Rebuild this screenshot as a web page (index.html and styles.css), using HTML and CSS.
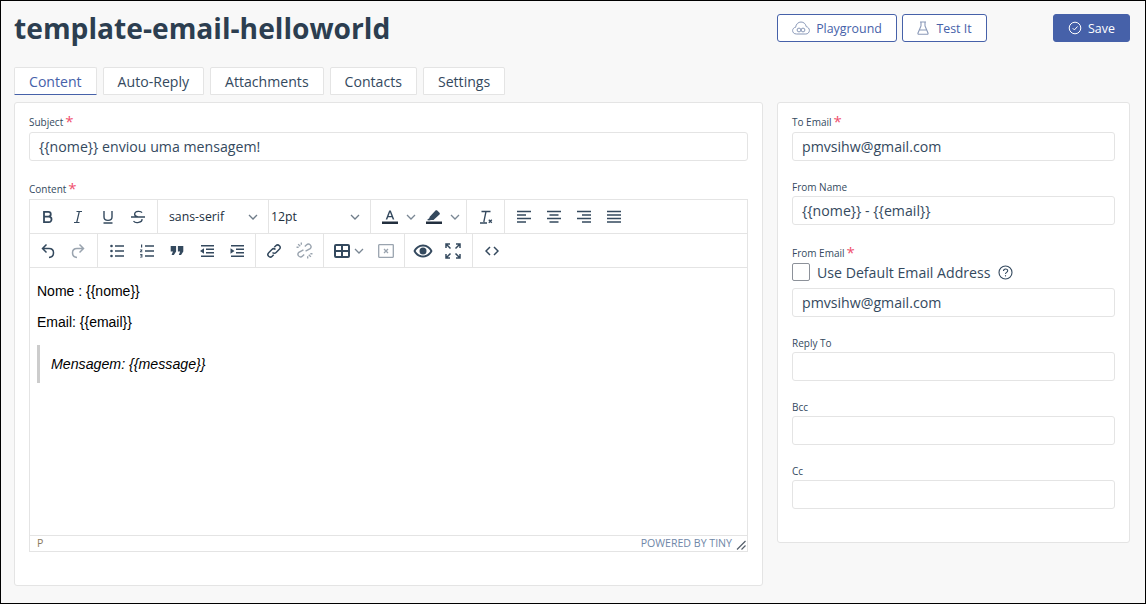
FILE: index.html
```html
<!DOCTYPE html>
<html lang="en">
<head>
  <meta charset="UTF-8">
  <title>template-email-helloworld</title>
  <link rel="stylesheet" href="styles.css">
</head>
<body>

<div class="page">
  <!-- Header -->
  <div class="top-bar">
    <h1 class="page-title">template-email-helloworld</h1>
    <div class="top-actions">
      <button class="btn btn-outline btn-playground">
        <svg width="18" height="14" viewBox="0 0 18 14" fill="none" stroke="#8a99b8" stroke-width="1"><path d="M4.5 13 C1.8 13 .6 11.2 .6 9.6 C.6 7.8 2 6.4 3.6 6.3 C4 3 6.4 1 9 1 C11.6 1 13.8 2.9 14.2 5.6 C16 6 17.4 7.6 17.4 9.4 C17.4 11.4 15.8 13 13.8 13 Z"/><circle cx="7" cy="9" r="1.9"/><circle cx="11" cy="9" r="1.9"/></svg>
        Playground
      </button>
      <button class="btn btn-outline btn-test">
        <svg width="12" height="14" viewBox="0 0 12 14" fill="none" stroke="#8a99b8" stroke-width="1.1"><path d="M3 1h6M4 1v4L1 12c-.3.7.1 1.3.8 1.3h8.4c.7 0 1.1-.6.8-1.3L8 5V1M2.8 9h6.4"/></svg>
        Test It
      </button>
      <button class="btn btn-save">
        <svg width="14" height="14" viewBox="0 0 14 14" fill="none" stroke="#fff" stroke-width="1"><circle cx="7" cy="7" r="5.8"/><path d="M4.7 7.2l1.7 1.7 3.1-3.4"/></svg>
        Save
      </button>
    </div>
  </div>

  <!-- Tabs -->
  <div class="tabs">
    <div class="tab active">Content</div>
    <div class="tab">Auto-Reply</div>
    <div class="tab">Attachments</div>
    <div class="tab">Contacts</div>
    <div class="tab">Settings</div>
  </div>

  <div class="columns">
    <!-- Left panel -->
    <div class="panel panel-main">
      <label class="field-label">Subject <span class="req">*</span></label>
      <div class="text-input">{{nome}} enviou uma mensagem!</div>

      <label class="field-label label-content">Content <span class="req">*</span></label>
      <div class="editor">
        <div class="toolbar-row">
          <div class="tool-group">
            <span class="tool"><svg width="16" height="16" viewBox="0 0 16 16" fill="none" stroke="#34495e" stroke-width="1.8"><path d="M4 2.900h4.300c3.300 0 3.300 4.700 0 4.700H4h4.900c3.500 0 3.500 5.500 0 5.500H4Z"/></svg></span>
            <span class="tool"><svg width="16" height="16" viewBox="0 0 16 16" fill="none" stroke="#34495e" stroke-width="1.2"><path d="M6.500 2.500h5.500M4 13.500h5.500M9.300 2.500L6.700 13.500"/></svg></span>
            <span class="tool"><svg width="16" height="16" viewBox="0 0 16 16" fill="none" stroke="#34495e" stroke-width="1.400"><path d="M4 2v6c0 4.500 8 4.500 8 0V2M3.500 14h9"/></svg></span>
            <span class="tool"><svg width="16" height="16" viewBox="0 0 16 16" fill="none" stroke="#34495e" stroke-width="1.300"><path d="M12 3.600C11 2 5 1.500 4.600 5c-.2 1.700 1.400 2.500 3.400 3M1 8h14M12 10c.5 3.600-6.500 5-8.500 2"/></svg></span>
          </div>
          <div class="tool-group select-font"><span>sans-serif</span><svg class="chev" width="10" height="6" viewBox="0 0 10 6"><path d="M1 1l4 4 4-4"/></svg></div>
          <div class="tool-group select-size"><span>12pt</span><svg class="chev" width="10" height="6" viewBox="0 0 10 6"><path d="M1 1l4 4 4-4"/></svg></div>
          <div class="tool-group group-color">
            <span class="tool"><svg width="16" height="16" viewBox="0 0 16 16"><rect x="0" y="12.500" width="16" height="2.500" fill="#222f3e"/><path d="M3.700 10.500L7.200 1.500h1.600l3.500 9h-1.600l-.8-2.200H6.100l-.8 2.200ZM6.600 7h2.800L8 3.200Z" fill="#34495e"/></svg></span>
            <svg class="chev chev-light" width="10" height="6" viewBox="0 0 10 6"><path d="M1 1l4 4 4-4"/></svg>
            <span class="tool"><svg width="16" height="16" viewBox="0 0 16 16"><rect x="0" y="12.500" width="16" height="2.500" fill="#222f3e"/><path d="M3.500 8l6-6.500c.5-.5 1.200-.5 1.700 0l2.300 2.200c.5.500.5 1.200 0 1.700L7.500 11H5L3 11.500 1 11l2.500-2Z" fill="#34495e"/></svg></span>
            <svg class="chev chev-light" width="10" height="6" viewBox="0 0 10 6"><path d="M1 1l4 4 4-4"/></svg>
          </div>
          <div class="tool-group">
            <span class="tool"><svg width="16" height="16" viewBox="0 0 16 16" fill="none" stroke="#34495e" stroke-width="1.300"><path d="M4.500 2.500h9M9 2.500L6.800 13M3 14h7"/><path d="M11.800 10.800l3 3M14.800 10.800l-3 3" stroke-width="1.300"/></svg></span>
          </div>
          <div class="tool-group group-last">
            <span class="tool"><svg width="16" height="14" viewBox="0 0 16 14" stroke="#34495e" stroke-width="1.400"><path d="M1 1.500h14M1 5h9M1 8.500h14M1 12h9"/></svg></span>
            <span class="tool"><svg width="16" height="14" viewBox="0 0 16 14" stroke="#34495e" stroke-width="1.400"><path d="M1 1.500h14M3.500 5h9M1 8.500h14M3.500 12h9"/></svg></span>
            <span class="tool"><svg width="16" height="14" viewBox="0 0 16 14" stroke="#34495e" stroke-width="1.400"><path d="M1 1.500h14M6 5h9M1 8.500h14M6 12h9"/></svg></span>
            <span class="tool"><svg width="16" height="14" viewBox="0 0 16 14" stroke="#34495e" stroke-width="1.400"><path d="M1 1.500h14M1 5h14M1 8.500h14M1 12h14"/></svg></span>
          </div>
        </div>
        <div class="toolbar-row">
          <div class="tool-group">
            <span class="tool"><svg width="16" height="16" viewBox="0 0 16 16" fill="none" stroke="#34495e" stroke-width="1.500"><path d="M6.500 1.500L2.500 5.500l4 4M2.500 5.500h6.500c6 0 6 8.500 0 9"/></svg></span>
            <span class="tool"><svg width="16" height="16" viewBox="0 0 16 16" fill="none" stroke="#9aa4af" stroke-width="1.500"><path d="M9.500 1.500l4 4-4 4M13.500 5.500H7c-6 0-6 8.500 0 9"/></svg></span>
          </div>
          <div class="tool-group group-lists">
            <span class="tool"><svg width="16" height="14" viewBox="0 0 16 14"><g fill="#34495e"><circle cx="2.500" cy="2" r="1.300"/><circle cx="2.500" cy="7" r="1.300"/><circle cx="2.500" cy="12" r="1.300"/><path d="M6 1.300h9v1.400H6zM6 6.300h9v1.400H6zM6 11.300h9v1.400H6z"/></g></svg></span>
            <span class="tool"><svg width="16" height="14" viewBox="0 0 16 14"><g fill="#34495e"><path d="M2 .5h1.200v3H2zM1 5.500h2.400v.8L2.200 7.500h1.200v.8H1v-.8L2.200 6.300H1zM1 10h2.400v3.500H1v-.7h1.400v-.7H1.300v-.7h1.100v-.7H1zM6 1.300h9v1.400H6zM6 6.300h9v1.400H6zM6 11.300h9v1.400H6z"/></g></svg></span>
            <span class="tool"><svg width="14" height="9" viewBox="0 0 14 10" fill="#34495e"><path d="M0 0h6v6L3.500 10H1l1.500-4H0ZM8 0h6v6l-2.500 4H9l1.500-4H8Z"/></svg></span>
            <span class="tool"><svg width="16" height="14" viewBox="0 0 16 14"><g fill="#34495e"><path d="M2 1h13v1.500H2zM7 4.500h8V6H7zM7 8h8v1.500H7zM2 11.500h13V13H2zM5 4.300v5.400L1 7z"/></g></svg></span>
            <span class="tool"><svg width="16" height="14" viewBox="0 0 16 14"><g fill="#34495e"><path d="M2 1h13v1.500H2zM7 4.500h8V6H7zM7 8h8v1.500H7zM2 11.500h13V13H2zM1.500 4.300v5.400L5.500 7z"/></g></svg></span>
          </div>
          <div class="tool-group">
            <span class="tool"><svg width="16" height="16" viewBox="0 0 16 16" fill="none" stroke="#34495e" stroke-width="1.500"><path d="M6.500 9.500c1.300 1.300 2.600 1 3.600 0l3.200-3.200c2.400-2.500-1-5.900-3.500-3.500L8.300 4.300"/><path d="M9.500 6.500c-1.300-1.300-2.600-1-3.600 0L2.700 9.700c-2.400 2.500 1 5.900 3.500 3.500l1.500-1.500"/></svg></span>
            <span class="tool"><svg width="17" height="17" viewBox="0 0 16 16" fill="none" stroke="#9aa4af" stroke-width="1.300"><path d="M7 7.500L2.700 9.700c-2.400 2.500 1 5.900 3.500 3.500l1.500-1.500M9 8.500l4.300-2.200c2.400-2.500-1-5.900-3.500-3.500L8.300 4.300M2 2l2 2M5 .5v2M.5 5h2M14 14l-2-2M11 15.500v-2M15.500 11h-2"/></svg></span>
          </div>
          <div class="tool-group group-table">
            <span class="tool"><svg width="16" height="14" viewBox="0 0 16 14" fill="none" stroke="#34495e" stroke-width="2"><rect x="1" y="1" width="14" height="12" rx="1"/><path d="M1 7h14M8 1v12"/></svg></span>
            <svg class="chev chev-table" width="10" height="6" viewBox="0 0 10 6"><path d="M1 1l4 4 4-4"/></svg>
            <span class="tool"><svg width="16" height="14" viewBox="0 0 16 14" fill="none" stroke="#9aa4af" stroke-width="1.300"><rect x=".7" y=".7" width="14.600" height="12.600" rx=".5"/><path d="M6 5l4 4M10 5l-4 4"/></svg></span>
          </div>
          <div class="tool-group">
            <span class="tool"><svg width="20" height="14" viewBox="0 0 20 14"><path d="M10 .5C5.500.5 2 3.500.5 7c1.500 3.500 5 6.500 9.500 6.500s8-3 9.500-6.500C18 3.500 14.500.5 10 .5Zm0 11C6.800 11.500 4 9.500 2.600 7 4 4.500 6.800 2.500 10 2.500S16 4.500 17.400 7C16 9.500 13.200 11.500 10 11.500Z" fill="#34495e"/><circle cx="10" cy="7" r="3.500" fill="#34495e"/></svg></span>
            <span class="tool"><svg width="16" height="16" viewBox="0 0 16 16" fill="none" stroke="#34495e" stroke-width="1.500"><path d="M1 5V1h4M11 1h4v4M15 11v4h-4M5 15H1v-4M1.500 1.500L5.500 5.500M14.500 1.500L10.500 5.500M14.500 14.500L10.500 10.500M1.500 14.500L5.500 10.500"/></svg></span>
          </div>
          <div class="tool-group group-code">
            <span class="tool"><svg width="14" height="10" viewBox="0 0 14 10" fill="none" stroke="#34495e" stroke-width="1.500"><path d="M5 1L1 5l4 4M9 1l4 4-4 4"/></svg></span>
          </div>
        </div>
        <div class="editor-body">
          <p>Nome : {{nome}}</p>
          <p>Email: {{email}}</p>
          <blockquote>Mensagem: {{message}}</blockquote>
        </div>
        <div class="status-bar">
          <span class="path">P</span>
          <span class="brand">POWERED BY TINY</span>
          <svg class="grip" width="10" height="10" viewBox="0 0 10 10" stroke="#555f6b" stroke-width="1.200"><path d="M1 9.500L9.500 1M5.500 9.500l4-4"/></svg>
        </div>
      </div>
    </div>

    <!-- Right panel -->
    <div class="panel panel-side">
      <label class="field-label">To Email <span class="req">*</span></label>
      <div class="text-input">pmvsihw@gmail.com</div>

      <label class="field-label">From Name</label>
      <div class="text-input">{{nome}} - {{email}}</div>

      <label class="field-label label-tight">From Email <span class="req">*</span></label>
      <div class="check-row">
        <span class="checkbox"></span>
        <span>Use Default Email Address</span>
        <svg width="15" height="15" viewBox="0 0 15 15" fill="none" stroke="#34495e" stroke-width="1.100"><circle cx="7.500" cy="7.500" r="6.500"/><path d="M5.500 6c0-2.700 4.200-2.700 4.200-.2 0 1.600-2.200 1.500-2.200 3.200"/><path d="M7.500 10.200v1.200"/></svg>
      </div>
      <div class="text-input">pmvsihw@gmail.com</div>

      <label class="field-label">Reply To</label>
      <div class="text-input"></div>

      <label class="field-label">Bcc</label>
      <div class="text-input"></div>

      <label class="field-label">Cc</label>
      <div class="text-input"></div>
    </div>
  </div>
</div>

</body>
</html>
```

FILE: styles.css
```css
* {
  box-sizing: border-box;
}
html, body {
  height: 100%;
}
body {
  margin: 0;
  font-family: 'Open Sans', sans-serif;
  color: #34495e;
}
.page {
  height: 604px;
  border: 1px solid #000;
  background: #f8f8f8;
  padding: 0 15px 0 13px;
}
.top-bar {
  display: flex;
  justify-content: space-between;
  height: 66px;
  padding-top: 12px;
}
.page-title {
  margin: 0;
  font-size: 28.2px;
  line-height: 30px;
  font-weight: 700;
  color: #2c3e50;
}
.top-actions {
  display: flex;
  align-items: flex-start;
  padding-top: 1px;
}
.btn {
  display: inline-flex;
  align-items: center;
  justify-content: center;
  gap: 6px;
  height: 28px;
  border-radius: 3px;
  font-family: 'Open Sans', sans-serif;
  font-size: 12.4px;
  padding: 0;
}
.btn-outline {
  background: #fff;
  border: 1px solid #4661a9;
  color: #4661a9;
}
.btn-playground {
  width: 120px;
  margin-right: 5px;
}
.btn-test {
  width: 85px;
  margin-right: 66px;
  gap: 7px;
}
.btn-save {
  width: 77px;
  background: #4661a9;
  border: 1px solid #4661a9;
  color: #fff;
}
.tabs {
  display: flex;
  gap: 6px;
  height: 35px;
}
.tab {
  height: 28px;
  padding: 0 14px;
  background: #fff;
  border: 1px solid #e4e4e4;
  border-radius: 2px 2px 0 0;
  font-size: 14.1px;
  line-height: 27px;
  color: #34495e;
}
.tab.active {
  color: #4661a9;
  border-bottom: 1px solid #4661a9;
}
.columns {
  display: flex;
  align-items: flex-start;
  gap: 14px;
}
.panel {
  background: #fff;
  border: 1px solid #e4e4e4;
  border-radius: 3px;
  padding: 0 14px;
}
.panel-main {
  width: 749px;
  height: 484px;
}
.panel-side {
  width: 353px;
  height: 441px;
}
.field-label {
  display: flex;
  gap: 2px;
  height: 29px;
  padding-top: 12px;
  font-size: 10px;
  line-height: 14px;
  color: #34495e;
}
.req {
  color: #f0506e;
  font-size: 15px;
  line-height: 12px;
}
.text-input {
  height: 29px;
  padding: 0 10px 0 9px;
  border: 1px solid #e4e4e4;
  border-radius: 3px;
  background: #fff;
  font-size: 14.15px;
  line-height: 27px;
  color: #34495e;
}
.panel-side .text-input + .field-label {
  height: 35px;
  padding-top: 19px;
}
.panel-side .text-input + .label-tight {
  height: 34px;
  padding-top: 21px;
}
.panel-main .label-content {
  height: 38px;
  padding-top: 21px;
}
.check-row {
  display: flex;
  align-items: center;
  height: 29px;
  gap: 7px;
  font-size: 14.15px;
  padding-bottom: 3px;
}
.checkbox {
  width: 18px;
  height: 18px;
  border: 1px solid #8c9199;
  border-radius: 2px;
  background: #fff;
}
.editor {
  width: 719px;
  height: 353px;
  border: 1px solid #e4e4e4;
  display: flex;
  flex-direction: column;
}
.toolbar-row {
  display: flex;
  height: 34px;
  border-bottom: 1px solid #e4e4e4;
  flex: none;
}
.tool-group {
  display: flex;
  align-items: center;
  padding: 0 4px 0 3px;
  border-right: 1px solid #e4e4e4;
}
.group-last,
.group-code {
  border-right: none;
}
.group-last,
.group-lists,
.group-color {
  padding-left: 4px;
  padding-right: 3px;
}
.group-table .tool:last-child {
  margin-right: -1px;
}
.group-code {
  padding-left: 4px;
}
.tool {
  width: 30px;
  height: 30px;
  display: flex;
  align-items: center;
  justify-content: center;
}
.select-font {
  width: 111px;
  justify-content: space-between;
  padding: 0 7px 0 11px;
  font-size: 12.3px;
  color: #222f3e;
}
.select-size {
  width: 102px;
  justify-content: space-between;
  padding: 0 7px 0 2px;
  font-size: 12.3px;
  color: #222f3e;
}
.group-color {
  width: 96px;
}
.chev {
  fill: none;
  stroke: #6f7c89;
  stroke-width: 1.300;
  margin-right: 3px;
}
.chev-light {
  stroke: #7a8794;
  margin-left: 1px;
}
.chev-table {
  stroke: #7a8794;
  margin-left: -3px;
  margin-right: 7px;
}
.editor-body {
  flex: 1;
  padding: 14px 7px 0;
  font-family: 'Liberation Sans', Arial, sans-serif;
  font-size: 14px;
  line-height: 18px;
  color: #000;
}
.editor-body p {
  margin: 0 0 13px;
}
.editor-body blockquote {
  margin: 14px 0 0 0;
  border-left: 3px solid #ccc;
  padding: 10px 0 10px 11px;
  font-size: 14.2px;
  font-style: italic;
}
.status-bar {
  flex: none;
  height: 16px;
  border-top: 1px solid #e4e4e4;
  display: flex;
  align-items: center;
  padding: 0 1px 1px 7px;
  font-size: 10.6px;
}
.status-bar .path {
  flex: 1;
  color: #8a7a5e;
}
.status-bar .brand {
  color: #6f87a8;
}
.grip {
  margin-left: 4px;
  align-self: flex-end;
}
```
